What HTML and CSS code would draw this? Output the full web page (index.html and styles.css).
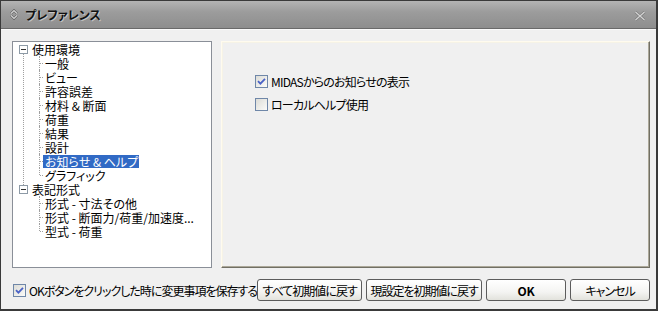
FILE: index.html
```html
<!DOCTYPE html>
<html lang="ja">
<head>
    <meta charset="UTF-8">
    <title>プレファレンス</title>
    <link rel="stylesheet" href="styles.css">
</head>
<body>
    <div class="window">
        <div class="titlebar">
            <svg class="title-icon" width="8" height="11" viewBox="0 0 8 11">
                <path d="M1 4.5 L4 1.5 L7 4.5 M1 6.5 L4 9.5 L7 6.5" fill="none" stroke="#5a5a5a" stroke-width="2.4"/>
                <path d="M1 4.5 L4 1.5 L7 4.5 M1 6.5 L4 9.5 L7 6.5" fill="none" stroke="#d8d8d8" stroke-width="1.1"/>
            </svg>
            <span class="title">プレファレンス</span>
            <svg class="close" width="12" height="10" viewBox="0 0 12 10">
                <path d="M1.5 1 L10.5 9 M10.5 1 L1.5 9" stroke="#7a7a7a" stroke-width="2.6"/>
                <path d="M1.5 1 L10.5 9 M10.5 1 L1.5 9" stroke="#d4d4d4" stroke-width="1.3"/>
            </svg>
        </div>

        <div class="content">
            <div class="panels">
                <div class="tree-box">
                    <ul class="tree">
                        <li class="node">
                            <div class="label"><span class="toggle"></span><span class="text">使用環境</span></div>
                            <ul class="children">
                                <li><span class="text">一般</span></li>
                                <li><span class="text">ビュー</span></li>
                                <li><span class="text">許容誤差</span></li>
                                <li><span class="text">材料 &amp; 断面</span></li>
                                <li><span class="text">荷重</span></li>
                                <li><span class="text">結果</span></li>
                                <li><span class="text">設計</span></li>
                                <li><span class="text selected">お知らせ &amp; ヘルプ</span></li>
                                <li><span class="text">グラフィック</span></li>
                            </ul>
                        </li>
                        <li class="node last">
                            <div class="label"><span class="toggle"></span><span class="text">表記形式</span></div>
                            <ul class="children">
                                <li><span class="text">形式 - 寸法その他</span></li>
                                <li><span class="text">形式 - 断面力/荷重/加速度...</span></li>
                                <li><span class="text">型式 - 荷重</span></li>
                            </ul>
                        </li>
                    </ul>
                </div>

                <div class="page">
                    <label class="check-row">
                        <span class="checkbox checked">
                            <svg width="9" height="9" viewBox="0 0 9 9"><path d="M1 4.2 L3.4 6.6 L8 1.8" fill="none" stroke="#4a62c6" stroke-width="1.8"/></svg>
                        </span>
                        <span class="caption">MIDASからのお知らせの表示</span>
                    </label>
                    <label class="check-row">
                        <span class="checkbox"></span>
                        <span class="caption">ローカルヘルプ使用</span>
                    </label>
                </div>
            </div>

            <div class="footer">
                <label class="check-row save">
                    <span class="checkbox checked">
                        <svg width="9" height="9" viewBox="0 0 9 9"><path d="M1 4.2 L3.4 6.6 L8 1.8" fill="none" stroke="#4a62c6" stroke-width="1.8"/></svg>
                    </span>
                    <span class="caption">OKボタンをクリックした時に変更事項を保存する</span>
                </label>
                <div class="buttons">
                    <button class="btn-reset-all">すべて初期値に戻す</button>
                    <button class="btn-reset">現設定を初期値に戻す</button>
                    <button class="btn-ok">OK</button>
                    <button class="btn-cancel">キャンセル</button>
                </div>
            </div>
        </div>
    </div>
</body>
</html>
```

FILE: styles.css
```css
body {
    margin: 0;
    font-family: "Noto Sans CJK JP", "Noto Sans", sans-serif;
    font-size: 12px;
    font-feature-settings: "palt";
    color: #000;
    background-color: #f0f0f0;
}
.window {
    width: 658px;
    height: 311px;
    box-sizing: border-box;
    border: 1px solid #3a3a3a;
    border-right-width: 2px;
    border-bottom-width: 2px;
    background-color: #f0f0f0;
    display: flex;
    flex-direction: column;
}
.titlebar {
    height: 27px;
    flex: none;
    display: flex;
    align-items: center;
    padding-left: 9px;
    padding-right: 10px;
    background: linear-gradient(#b4b4b4, #9c9c9c 40%, #8e8e8e);
    border-bottom: 1px solid #6a6a6a;
}
.title-icon {
    margin-right: 7px;
}
.title {
    font-weight: bold;
    font-size: 12px;
    color: #111;
    text-shadow: 1px 1px 0 rgba(255, 255, 255, 0.45);
    flex: 1;
}
.close {
    margin-top: 2px;
}
.content {
    flex: 1;
    display: flex;
    flex-direction: column;
    padding: 11px 6px 0 11px;
    border-top: 1px solid #fafafa;
}
.panels {
    display: flex;
    height: 227px;
    gap: 9px;
}
.tree-box {
    width: 200px;
    box-sizing: border-box;
    border: 1px solid #8a8f98;
    background-color: #fff;
    overflow: hidden;
}
.tree, .children {
    list-style: none;
    margin: 0;
    padding: 0;
}
.tree li {
    position: relative;
}
.label {
    height: 14px;
    display: flex;
    align-items: center;
    padding-left: 6px;
}
.toggle {
    width: 9px;
    height: 9px;
    box-sizing: border-box;
    border: 1px solid #8d9aa6;
    background-color: #fff;
    position: relative;
    margin-right: 3px;
}
.toggle::after {
    content: "";
    position: absolute;
    left: 1px;
    top: 3px;
    width: 5px;
    height: 1px;
    background-color: #333;
}
.node::before {
    content: "";
    position: absolute;
    left: 10px;
    top: 12px;
    bottom: -3px;
    border-left: 1px dotted #a0a0a0;
}
.node.last::before {
    display: none;
}
.children {
    padding-left: 30px;
}
.children li {
    height: 14px;
    display: flex;
    align-items: center;
}
.children li::before {
    content: "";
    position: absolute;
    left: -4px;
    top: 0;
    bottom: 0;
    border-left: 1px dotted #a0a0a0;
}
.children li:last-child::before {
    bottom: 7px;
}
.children li::after {
    content: "";
    position: absolute;
    left: -3px;
    top: 7px;
    width: 3px;
    border-top: 1px dotted #a0a0a0;
}
.text {
    display: inline-block;
    height: 13px;
    line-height: 13px;
    padding: 0 1px 0 2px;
    white-space: nowrap;
}
.label .text {
    padding-left: 1px;
}
.selected {
    background-color: #316ac5;
    color: #fff;
}
.page {
    flex: 1;
    box-sizing: border-box;
    border: 1px solid;
    border-color: #fffbee #716f64 #716f64 #fffbee;
    box-shadow: inset -1px -1px 0 #aca899, inset 1px 1px 0 #f6f3e6;
    padding: 33px 0 0 33px;
    display: flex;
    flex-direction: column;
    gap: 10px;
}
.check-row {
    display: flex;
    align-items: center;
    height: 13px;
    white-space: nowrap;
}
.caption {
    display: inline-block;
    height: 13px;
    line-height: 13px;
    letter-spacing: -0.8px;
}
.checkbox {
    width: 13px;
    height: 13px;
    flex: none;
    box-sizing: border-box;
    border: 1px solid #6f87a8;
    background: linear-gradient(135deg, #dcdcd7, #fbfbf9);
    margin-right: 3px;
    display: flex;
    align-items: center;
    justify-content: center;
}
.footer {
    margin-top: 11px;
    margin-right: 2px;
    height: 22px;
    display: flex;
    align-items: center;
    justify-content: space-between;
}
.save {
    margin-left: 1px;
}
.save .caption {
    letter-spacing: -1px;
}
.buttons {
    display: flex;
    gap: 4px;
}
button {
    height: 22px;
    box-sizing: border-box;
    font-family: inherit;
    font-size: 12px;
    font-feature-settings: "palt";
    letter-spacing: -1px;
    white-space: nowrap;
    color: #000;
    border: 1px solid #5c5c5c;
    border-radius: 3px;
    background: linear-gradient(#ffffff, #f4f4f2 60%, #e2e2dc);
    padding: 0;
    cursor: pointer;
}
.btn-reset-all {
    width: 105px;
}
.btn-reset {
    width: 116px;
}
.btn-ok {
    width: 80px;
    font-weight: bold;
    letter-spacing: 0;
}
.btn-cancel {
    width: 80px;
}
```
